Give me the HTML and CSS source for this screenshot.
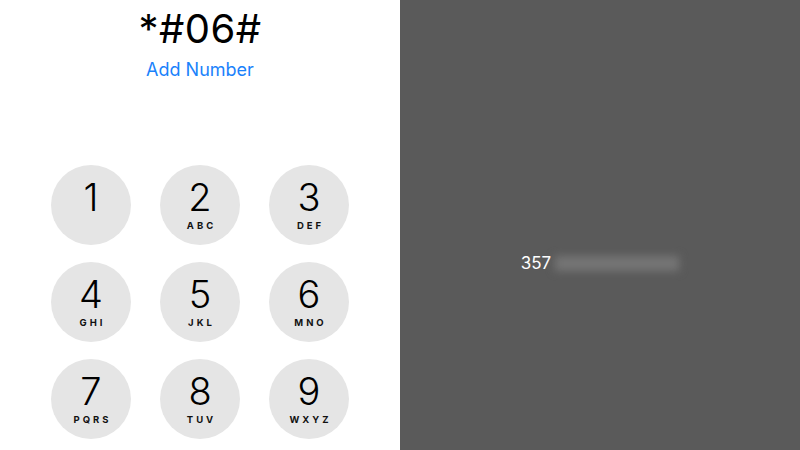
FILE: index.html
```html
<!DOCTYPE html>
<html>
<head>
<meta charset="utf-8">
<link rel="stylesheet" href="styles.css">
</head>
<body>
<div class="screen">
  <section class="dialer">
    <div class="entry">*#06#</div>
    <div class="add">Add Number</div>
    <div class="keypad">
      <div class="key"><span class="digit">1</span><span class="letters"></span></div>
      <div class="key"><span class="digit">2</span><span class="letters">ABC</span></div>
      <div class="key"><span class="digit">3</span><span class="letters">DEF</span></div>
      <div class="key"><span class="digit">4</span><span class="letters">GHI</span></div>
      <div class="key"><span class="digit">5</span><span class="letters">JKL</span></div>
      <div class="key"><span class="digit">6</span><span class="letters">MNO</span></div>
      <div class="key"><span class="digit">7</span><span class="letters">PQRS</span></div>
      <div class="key"><span class="digit">8</span><span class="letters">TUV</span></div>
      <div class="key"><span class="digit">9</span><span class="letters">WXYZ</span></div>
    </div>
  </section>
  <section class="result">
    <div class="imei"><span class="imei-num">357</span><span class="blurred"></span></div>
  </section>
</div>
</body>
</html>
```
FILE: styles.css
```css
html, body {
  margin: 0;
  padding: 0;
  width: 800px;
  height: 450px;
  overflow: hidden;
  font-family: "Inter", "Liberation Sans", sans-serif;
}
.screen {
  display: flex;
  width: 800px;
  height: 450px;
}
.dialer {
  width: 400px;
  background: #ffffff;
  display: flex;
  flex-direction: column;
  align-items: center;
}
.entry {
  margin-top: 5px;
  font-size: 40px;
  line-height: 48px;
  color: #000;
  letter-spacing: 0.5px;
}
.add {
  margin-top: 6px;
  font-size: 18px;
  line-height: 22px;
  color: #1a82fb;
}
.keypad {
  margin-top: 84px;
  display: grid;
  grid-template-columns: repeat(3, 80px);
  grid-auto-rows: 80px;
  column-gap: 29px;
  row-gap: 17px;
}
.key {
  width: 80px;
  height: 80px;
  border-radius: 50%;
  background: #e5e5e5;
  display: flex;
  flex-direction: column;
  align-items: center;
  justify-content: flex-start;
  box-sizing: border-box;
  padding-top: 12px;
}
.digit {
  font-size: 38px;
  font-weight: 300;
  line-height: 40px;
  color: #000;
}
.letters {
  margin-top: 3px;
  font-size: 9.5px;
  font-weight: 700;
  line-height: 11px;
  letter-spacing: 3px;
  padding-left: 3px;
  color: #111;
}
.result {
  flex: 1;
  background: #5a5a5a;
  display: flex;
  align-items: center;
  justify-content: center;
}
.imei {
  display: flex;
  align-items: center;
  margin-top: 76px;
}
.imei-num {
  font-size: 17px;
  color: #ffffff;
  line-height: 20px;
}
.blurred {
  margin-left: 4px;
  width: 124px;
  height: 15px;
  background: #757575;
  filter: blur(4px);
}
```
